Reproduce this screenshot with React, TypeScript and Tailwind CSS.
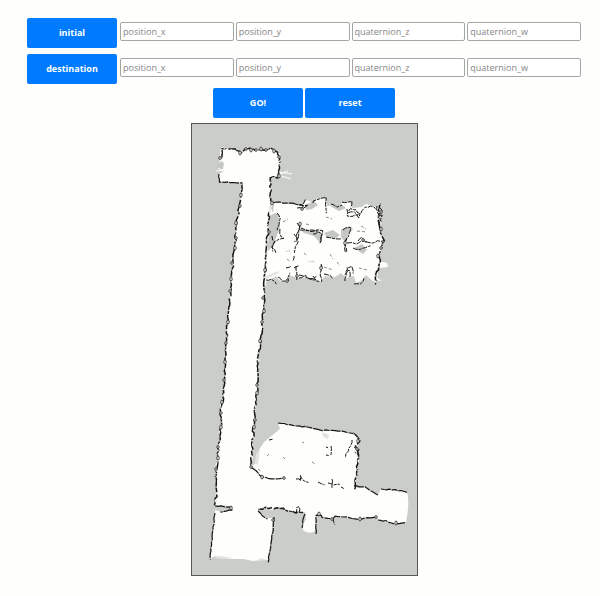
import { useState } from "react";

type Point = [number, number];

const FIELDS = ["position_x", "position_y", "quaternion_z", "quaternion_w"];

/* Free space seen by the scanner, in map units. */
const CORRIDOR =
  "M222 147L229 149L238 150L241 154L245 149L258 150L271 149L277 152L280 157L279 168L277 177L271 178L270 202L268 235L266 262L264 283L264 300L262 330L258 357L257 393L254 422L251 467L262 477L285 478L300 476L353 488L365 487L378 495L381 489L407 492Q410 502 406 522L393 524L378 520L377 517L358 519L335 516L333 519L322 518L322 515L316 515L315 531Q309 535 303 530L303 525L306 519L305 512L290 512L283 509L259 508L258 511L267 518L273 518L272 530L268 560L262 560L253 561L243 559L233 559L221 558L215 556L210 559L214 520L215 510L222 512L232 510L231 506L215 505L217 480L218 450L221 427L221 410L225 390L226 350L228 317L231 290L233 260L236 240L236 225L240 205L242 183L219 182L219 174L224 171L218 169L220 160L220 151Z";
const OFFICES =
  "M271 202L302 205L307 200L314 203L316 199L325 198L327 206L339 205L343 202L350 202L352 208L362 207L366 204L380 208L379 219L380 233L384 240L381 250L379 262L377 272L374 282L366 275L362 280L356 283L354 276L346 278L341 273L335 277L325 276L320 282L313 278L298 278L289 275L284 282L279 280L276 276L265 283Z";
const HALL =
  "M278 423L300 427L320 430L341 431L352 433L360 440L356 450L358 458L356 475L354 490L300 485L262 477L252 466L255 464Q258 445 270 437L280 429Z";

const WALLS: Point[][] = [
  [[221, 159], [222, 148], [229, 149], [238, 150], [241, 154], [245, 148], [258, 150], [271, 149], [277, 152], [280, 157], [279, 168], [277, 177], [271, 178], [270, 202]],
  [[242, 183], [240, 205], [236, 225], [235, 245], [233, 260], [231, 290], [228, 317], [226, 350], [224, 390], [221, 410], [221, 427], [218, 450], [216, 473], [217, 490], [215, 505]],
  [[269, 212], [267, 245], [265, 273], [264, 300], [262, 330], [258, 357], [257, 393], [254, 422], [251, 467]],
  [[353, 433], [360, 440], [356, 446], [358, 455], [356, 475], [354, 490]],
  [[380, 203], [379, 219], [380, 233], [384, 240], [381, 250], [379, 263], [377, 272], [375, 285]],
  [[258, 509], [266, 508], [283, 509], [290, 512], [304, 512]],
];

const THIN_WALLS: Point[][] = [
  [[219, 174], [219, 182], [242, 183]],
  [[271, 202], [286, 203], [303, 205]],
  [[278, 423], [290, 425], [308, 427], [320, 430], [341, 431], [353, 434]],
  [[251, 467], [262, 477], [274, 479], [285, 478]],
  [[215, 506], [231, 507], [232, 510], [220, 512]],
  [[215, 513], [213, 530], [210, 560]],
  [[258, 511], [267, 519]],
  [[274, 517], [273, 530], [268, 563]],
  [[305, 514], [303, 520], [302, 528]],
  [[316, 534], [316, 515], [322, 515], [322, 518], [333, 519], [335, 516], [346, 517], [358, 519], [377, 517]],
  [[378, 520], [386, 521], [393, 524], [405, 523]],
  [[354, 486], [365, 487], [378, 495]],
  [[381, 489], [395, 490], [407, 492]],
];

/* Small closed returns along the walls and door frames. */
const LOOPS: Point[] = [
  [240, 153], [246, 149], [251, 150], [256, 150], [261, 149], [266, 150], [274, 151], [279, 157], [279, 176], [220, 158],
  [241, 195], [240, 206], [236, 223], [236, 238], [235, 248], [232, 263], [231, 279], [230, 291], [228, 322], [226, 343], [225, 362],
  [224, 380], [222, 402], [221, 413], [221, 427], [218, 447], [218, 458], [216, 469], [272, 203], [269, 232], [265, 270], [263, 298],
  [264, 311], [262, 322], [260, 341], [257, 385], [257, 393], [255, 420], [254, 427], [251, 467], [262, 477], [284, 478],
  [231, 508], [273, 520], [319, 514], [332, 519], [360, 519], [376, 517], [396, 523], [357, 449], [358, 441],
  [302, 209], [300, 224], [363, 240], [345, 243], [381, 212], [381, 229], [381, 248], [378, 256], [297, 276], [321, 268], [287, 281],
];

/* Partitions, desks and shelving in the offices. */
const CLUTTER: Point[][] = [
  [[297, 208], [303, 208], [305, 199]],
  [[313, 203], [314, 200], [326, 198], [326, 213]],
  [[299, 205], [307, 206], [302, 210]],
  [[331, 204], [337, 207], [343, 204]],
  [[342, 202], [351, 202], [351, 208]],
  [[347, 209], [347, 216], [355, 216], [360, 214], [354, 209], [348, 210]],
  [[348, 213], [354, 212], [358, 217], [361, 212]],
  [[361, 213], [365, 207], [373, 206], [376, 211]],
  [[379, 207], [382, 211], [378, 217], [382, 221]],
  [[377, 206], [377, 213], [382, 216], [379, 224]],
  [[277, 213], [280, 215], [279, 225], [277, 230]],
  [[280, 229], [279, 234], [284, 238], [277, 239], [272, 247], [276, 253]],
  [[272, 236], [274, 242], [272, 251]],
  [[297, 223], [300, 230], [296, 235], [298, 242], [294, 252]],
  [[300, 224], [299, 236], [296, 242]],
  [[294, 234], [299, 238], [295, 243]],
  [[300, 230], [312, 230], [322, 231], [321, 243]],
  [[301, 228], [306, 231], [318, 231]],
  [[313, 234], [321, 232], [320, 244]],
  [[326, 237], [334, 239], [341, 239]],
  [[343, 230], [350, 227], [349, 236], [344, 242], [345, 252]],
  [[347, 238], [345, 247], [347, 252]],
  [[347, 243], [358, 243], [364, 241], [371, 243], [384, 240]],
  [[358, 241], [362, 238], [366, 242]],
  [[353, 248], [360, 250], [371, 246]],
  [[294, 256], [293, 261]],
  [[296, 266], [297, 279]],
  [[294, 268], [299, 266]],
  [[299, 275], [308, 279], [317, 277]],
  [[299, 278], [305, 276], [316, 280]],
  [[321, 264], [321, 281]],
  [[324, 274], [333, 278]],
  [[345, 281], [347, 267], [352, 267], [353, 274]],
  [[350, 277], [348, 269], [344, 277]],
  [[278, 277], [283, 282], [288, 280], [289, 272]],
  [[266, 280], [272, 280], [276, 285]],
  [[286, 268], [292, 267]],
  [[313, 276], [319, 282]],
  [[354, 284], [361, 283], [364, 279]],
  [[296, 479], [301, 480], [300, 476], [303, 480], [308, 482]],
  [[318, 482], [325, 484]],
  [[328, 483], [340, 485]],
  [[332, 479], [332, 487]],
  [[341, 487], [344, 488]],
  [[326, 447], [329, 448]],
  [[331, 446], [331, 456]],
  [[326, 455], [329, 455]],
  [[352, 440], [346, 457]],
  [[354, 447], [359, 449], [358, 455], [354, 453]],
  [[269, 440], [273, 439]],
  [[296, 514], [296, 507], [300, 507], [299, 512]],
  [[333, 518], [334, 524]],
];

const SHADED = [
  "M269 216L275 213L279 214L280 228L276 238L271 248L268 251Z",
  "M273 213L274 203L271 208Z",
  "M301 230L318 230L322 233L320 243L314 236L304 233Z",
  "M341 229L350 226L353 229L348 235L345 242L341 237Z",
  "M324 233L333 230L340 235L335 239L327 237Z",
  "M305 205L314 201L318 205L312 209L306 210Z",
  "M330 206L341 204L346 208L339 211Z",
  "M354 248L362 244L367 250L363 254Z",
  "M217 166L221 161L224 163L223 169L218 170Z",
];

const FAINT = [
  "M322 432L329 435L328 439L323 437Z",
  "M255 464L256 454L260 448L259 458L258 465Z",
  "M264 277L278 271L279 273L266 279Z",
  "M284 252L290 249L291 252Z",
  "M306 262L314 260L315 263Z",
  "M213 557L221 556L232 558L221 559Z",
  "M254 561L262 558L267 560Z",
];

function rough(points: Point[], reach: number, seed: number): string {
  let state = seed * 7919 + 17;
  const next = () => {
    state = (state * 16807) % 2147483647;
    return state / 2147483647 - 0.5;
  };
  next();
  let path = `M${points[0][0]} ${points[0][1]}`;
  for (let i = 1; i < points.length; i++) {
    const [ax, ay] = points[i - 1];
    const [bx, by] = points[i];
    const steps = Math.max(1, Math.round(Math.hypot(bx - ax, by - ay) / 3));
    for (let s = 1; s <= steps; s++) {
      const x = ax + ((bx - ax) * s) / steps + next() * reach;
      const y = ay + ((by - ay) * s) / steps + next() * reach;
      path += `L${x.toFixed(1)} ${y.toFixed(1)}`;
    }
  }
  return path;
}

function FloorMap() {
  return (
    <svg viewBox="192 124 225 451" className="block w-full" role="img" aria-label="Floor map">
      <g fill="#fefffd">
        <path d={CORRIDOR} />
        <path d={OFFICES} />
        <path d={HALL} />
        <path d="M378 261L387 263L388 267L380 268ZM372 274L382 281L376 280Z" />
      </g>
      <g fill="#c5c7c5">
        {SHADED.map((d) => (
          <path key={d} d={d} />
        ))}
      </g>
      <g fill="#e2e4e2">
        {FAINT.map((d) => (
          <path key={d} d={d} />
        ))}
      </g>
      <path
        d="M278 172L292 174M278 175L291 179M216 171L228 170M218 168L227 173M277 175L288 171"
        fill="none"
        stroke="#fefffd"
      />
      <g fill="none" stroke="#161816" strokeLinejoin="round">
        {WALLS.map((wall, i) => (
          <g key={i}>
            <path d={rough(wall, 2, i + 1)} strokeWidth="1.5" strokeDasharray="9 1 5 2 12 1 3 1" />
            <path d={rough(wall, 3, i + 30)} stroke="#fefffd" strokeDasharray="2 4 1 6 3 5" />
          </g>
        ))}
        {THIN_WALLS.map((wall, i) => (
          <path key={i} d={rough(wall, 1, i + 60)} strokeWidth="1.2" strokeDasharray="10 1 6 1" />
        ))}
        {CLUTTER.map((line, i) => (
          <path key={i} d={rough(line, 2, i + 90)} strokeDasharray="5 1 3 1" />
        ))}
        {LOOPS.map(([x, y], i) => (
          <ellipse key={i} cx={x} cy={y} rx="1.2" ry={i % 2 ? 1.4 : 2} fill="#fefffd" strokeWidth="0.8" />
        ))}
      </g>
      <g fill="none" stroke="#8c8e8c" strokeDasharray="3 2">
        <path d="M357 231L367 232M361 226L366 229M324 267L333 270M283 222L288 219M302 442L304 443M283 457L285 459M267 456L269 454M312 462L315 464M359 268L367 270M306 224L310 225M337 262L340 266M326 217L332 219M287 259L291 262M304 253L307 256M330 254L333 259M258 469L262 472" />
      </g>
    </svg>
  );
}

const BUTTON =
  "h-[30px] w-[90px] shrink-0 rounded-[2px] bg-[#007bff] text-center text-[9px] font-bold text-white";

function PoseRow({ name }: { name: string }) {
  const [pose, setPose] = useState(["", "", "", ""]);
  return (
    <div className="flex items-start gap-[3px]">
      <button type="button" className={BUTTON}>
        {name}
      </button>
      <div className="mt-1 flex min-w-0 flex-1 gap-0.5">
        {FIELDS.map((field, i) => (
          <input
            key={field}
            type="text"
            aria-label={`${name} ${field}`}
            placeholder={field}
            value={pose[i]}
            onChange={(e) => setPose(pose.map((v, j) => (j === i ? e.target.value : v)))}
            className="h-[19px] min-w-0 flex-1 rounded-[2px] border border-[#a4a7a5] bg-white px-0.5 text-[9px] text-gray-800 placeholder:text-[#858585]"
          />
        ))}
      </div>
    </div>
  );
}

export default function App() {
  return (
    <main className="min-h-screen bg-[#fefffd] pt-[18px] pb-5 pl-2 [font-family:'Open_Sans','Noto_Sans',sans-serif]">
      <div className="flex flex-col gap-1.5 px-[19px]">
        <PoseRow name="initial" />
        <PoseRow name="destination" />
      </div>
      <div className="mt-1 flex justify-center gap-0.5">
        <button type="button" className={BUTTON}>
          GO!
        </button>
        <button type="button" className={BUTTON}>
          reset
        </button>
      </div>
      <div className="mx-auto mt-[5px] w-[227px] border border-[#555755] bg-[#cbcdcb]">
        <FloorMap />
      </div>
    </main>
  );
}
